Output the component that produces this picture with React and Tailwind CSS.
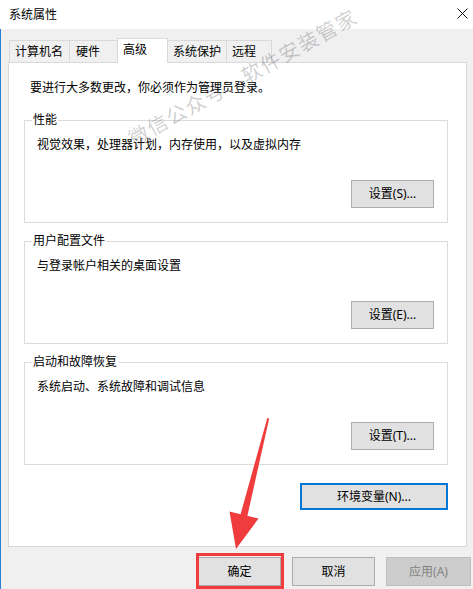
import React from 'react';

const tabs = [
  { label: '计算机名', cls: 'w-[61px]' },
  { label: '硬件', cls: 'w-[49px] -ml-px pl-[6px]' },
  { label: '高级', cls: 'w-[51px] -ml-px', active: true },
  { label: '系统保护', cls: 'w-[60px] -ml-px' },
  { label: '远程', cls: 'w-[46px] -ml-px' },
];

const groups = [
  { title: '性能', desc: '视觉效果，处理器计划，内存使用，以及虚拟内存', btn: '设置(S)...' },
  { title: '用户配置文件', desc: '与登录帐户相关的桌面设置', btn: '设置(E)...' },
  { title: '启动和故障恢复', desc: '系统启动、系统故障和调试信息', btn: '设置(T)...' },
];

const GroupBox = ({ title, desc, btn, first }) => (
  <fieldset className={`w-[424px] border border-[#dcdcdc] ${first ? '' : 'mt-[10px]'}`}>
    <legend className="ml-[7px] px-[1px] leading-[16px]">{title}</legend>
    <div className="pl-[12px] pr-[13px] pb-[14px]">
      <div className="mt-[9px] leading-[16px]">{desc}</div>
      <div className="flex justify-end mt-[27px]">
        <button className="w-[83px] h-[28px] bg-[#e1e1e1] border border-[#adadad] flex items-center justify-center leading-[16px]">
          {btn}
        </button>
      </div>
    </div>
  </fieldset>
);

export default function App() {
  return (
    <div className="relative w-[473px] h-[589px] overflow-hidden bg-[#f0f0f0] text-[12px] text-black font-['Noto_Sans','Noto_Sans_CJK_SC',sans-serif]">
      {/* title bar */}
      <div className="h-[29px] bg-white flex items-center justify-between pl-[9px] pr-[5px]">
        <span className="leading-[16px]">系统属性</span>
        <svg width="11" height="11" viewBox="0 0 11 11" className="mt-[-2px]">
          <path d="M0.5 0.5 L10.5 10.5 M10.5 0.5 L0.5 10.5" stroke="#111" strokeWidth="1" fill="none" />
        </svg>
      </div>

      {/* body */}
      <div className="h-[560px] border-l border-[#2a7fd4] pl-[7px] pt-[9px]">
        {/* tabs */}
        <div className="flex items-end h-[24px] pl-[1px]">
          {tabs.map((t) =>
            t.active ? (
              <div
                key={t.label}
                className={`relative z-10 -mb-px h-[25px] bg-white border border-b-0 border-[#d9d9d9] pl-[5px] pt-[3px] leading-[16px] ${t.cls}`}
              >
                {t.label}
              </div>
            ) : (
              <div
                key={t.label}
                className={`h-[22px] bg-[#f0f0f0] border border-b-0 border-[#d9d9d9] pl-[5px] pt-[3px] leading-[16px] ${t.cls}`}
              >
                {t.label}
              </div>
            )
          )}
        </div>

        {/* tab panel */}
        <div className="w-[459px] h-[485px] bg-white border border-[#d9d9d9]">
          <div className="pl-[21px] pt-[17px] leading-[16px]">要进行大多数更改，你必须作为管理员登录。</div>
          <div className="ml-[15px] mt-[16px] w-[424px] flex flex-col">
            {groups.map((g, i) => (
              <GroupBox key={g.title} {...g} first={i === 0} />
            ))}
            <button className="self-end mt-[18px] w-[148px] h-[27px] bg-[#e1e1e1] border-2 border-[#0078d7] flex items-center justify-center leading-[16px]">
              环境变量(N)...
            </button>
          </div>
        </div>

        {/* dialog buttons */}
        <div className="flex justify-end gap-[11px] pr-[2px] mt-[10px]">
          <button className="w-[83px] h-[29px] bg-[#e1e1e1] border border-[#adadad] flex items-center justify-center leading-[16px]">确定</button>
          <button className="w-[83px] h-[29px] bg-[#e1e1e1] border border-[#adadad] flex items-center justify-center leading-[16px]">取消</button>
          <button className="w-[85px] h-[29px] bg-[#cccccc] border border-[#bfbfbf] text-[#838383] flex items-center justify-center leading-[16px]">应用(A)</button>
        </div>
      </div>

      {/* watermark */}
      <div className="absolute left-[243px] top-[78px] -translate-x-1/2 -translate-y-1/2 rotate-[-29deg] whitespace-nowrap text-[20px] tracking-[1.5px] text-[rgba(0,0,0,0.2)] pointer-events-none">
        微信公众号：软件安装管家
      </div>

      {/* annotation */}
      <div className="absolute left-[196px] top-[553px] w-[88px] h-[36px] border-[3px] border-[#f03c3c] pointer-events-none" />
      <svg className="absolute left-0 top-0 pointer-events-none" width="473" height="589" viewBox="0 0 473 589">
        <polygon
          points="267.3,418 269.2,418.5 247.4,515.8 258.5,518.5 236,549 229.5,511.5 240.6,514.2"
          fill="#f03c3c"
        />
      </svg>
    </div>
  );
}
